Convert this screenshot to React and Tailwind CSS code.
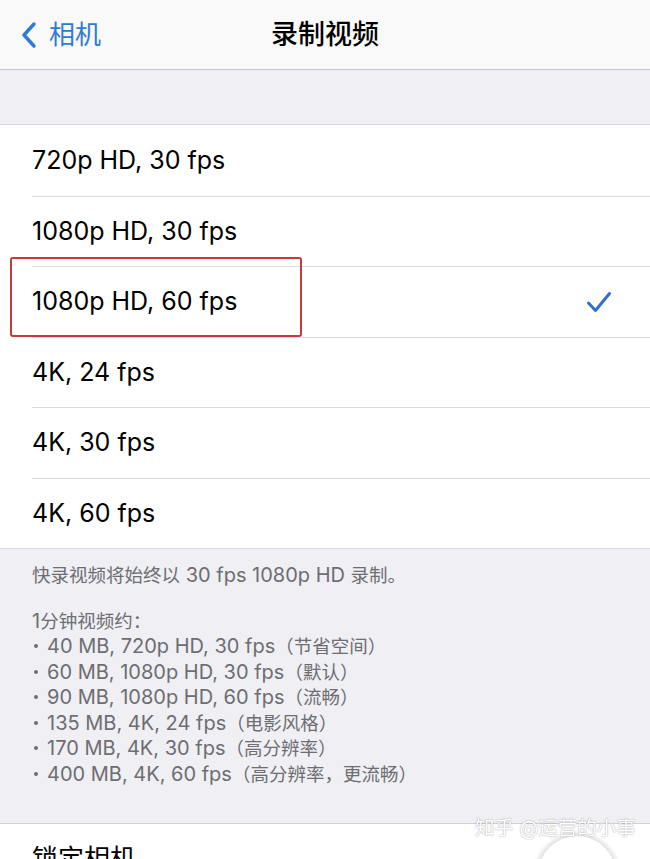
const options = [
  '720p HD, 30 fps',
  '1080p HD, 30 fps',
  '1080p HD, 60 fps',
  '4K, 24 fps',
  '4K, 30 fps',
  '4K, 60 fps',
]

const sizes = [
  '40 MB, 720p HD, 30 fps（节省空间）',
  '60 MB, 1080p HD, 30 fps（默认）',
  '90 MB, 1080p HD, 60 fps（流畅）',
  '135 MB, 4K, 24 fps（电影风格）',
  '170 MB, 4K, 30 fps（高分辨率）',
  '400 MB, 4K, 60 fps（高分辨率，更流畅）',
]

const font = { fontFamily: 'Inter, "Noto Sans CJK SC", sans-serif' }

// iOS sets latin runs a touch larger than the CJK ones in these notes
function Mixed({ text }) {
  const parts = text.split(/([\u3000-\u9fff\uff00-\uffef]+)/).filter(Boolean)
  return (
    <span>
      {parts.map((p, i) =>
        /[\u3000-\u9fff\uff00-\uffef]/.test(p) ? (
          <span key={i} className="text-[18.5px]">{p}</span>
        ) : (
          <span key={i} className="text-[20px]">{p}</span>
        )
      )}
    </span>
  )
}

export default function App() {
  return (
    <div className="relative w-[650px] h-[859px] overflow-hidden bg-[#efeff4]" style={font}>
      {/* nav bar */}
      <div className="grid h-[70px] grid-cols-[1fr_auto_1fr] items-center border-b border-[#c6c6c8] bg-[#f9f9f9]">
        <div className="flex items-center pl-[19px] text-[#2f7bd3]">
          <svg width="20" height="28" viewBox="0 0 20 28" fill="none">
            <path d="M15 3 L5 14 L15 25" stroke="currentColor" strokeWidth="3.4" strokeLinecap="round" strokeLinejoin="round" />
          </svg>
          <span className="ml-[10px] text-[26px] leading-none">相机</span>
        </div>
        <div className="text-[27px] font-medium leading-none text-black">录制视频</div>
        <div />
      </div>

      <div className="h-[54px]" />

      {/* options */}
      <div className="relative border-y border-[#d8d8dc] bg-white">
        {options.map((o, i) => (
          <div key={o} className="flex h-[70.5px] items-center pl-[32px]">
            <div className={`flex h-full flex-1 items-center pr-[38px] ${i > 0 ? 'border-t border-[#dcdcdf]' : ''}`}>
              <span className="flex-1 text-[25px] text-black">{o}</span>
              {i === 2 && (
                <svg width="26" height="22" viewBox="0 0 26 22" fill="none">
                  <path d="M2.5 12 L9.5 19.5 L23.5 2.5" stroke="#2a72cc" strokeWidth="3" strokeLinecap="round" strokeLinejoin="round" />
                </svg>
              )}
            </div>
          </div>
        ))}
        {/* red highlight frame */}
        <div className="absolute left-[10px] top-[132px] h-[80px] w-[292px] rounded-[3px] border-2 border-[#c9393b]" />
      </div>

      {/* footer notes */}
      <div className="h-[275px] border-b border-[#d2d2d6] px-[32px] pt-[13px] text-[#6d6d72]">
        <p className="flex h-[25.5px] items-center"><Mixed text="快录视频将始终以 30 fps 1080p HD 录制。" /></p>
        <p className="mt-[20.5px] flex h-[25.5px] items-center"><Mixed text="1分钟视频约：" /></p>
        {sizes.map((s) => (
          <p key={s} className="flex h-[25.5px] items-center">
            <span className="ml-[2px] mr-[9px] h-[4px] w-[4px] rounded-full bg-current" />
            <Mixed text={s} />
          </p>
        ))}
      </div>

      {/* next cell, cut off */}
      <div className="relative flex h-[40px] bg-white pl-[32px] pt-[22px]">
        <span className="text-[26px] leading-none text-black">锁定相机</span>
        <div className="absolute left-[538px] top-[12px] h-[78px] w-[78px] rounded-full bg-white shadow-[0_0_4px_3px_rgba(0,0,0,0.12)]" />
      </div>

      {/* watermark */}
      <div className="absolute left-[475px] top-[819px] text-[19.5px] leading-none text-white [text-shadow:0_0_1.5px_rgba(0,0,0,0.45)]">
        知乎 @运营的小事
      </div>
    </div>
  )
}
